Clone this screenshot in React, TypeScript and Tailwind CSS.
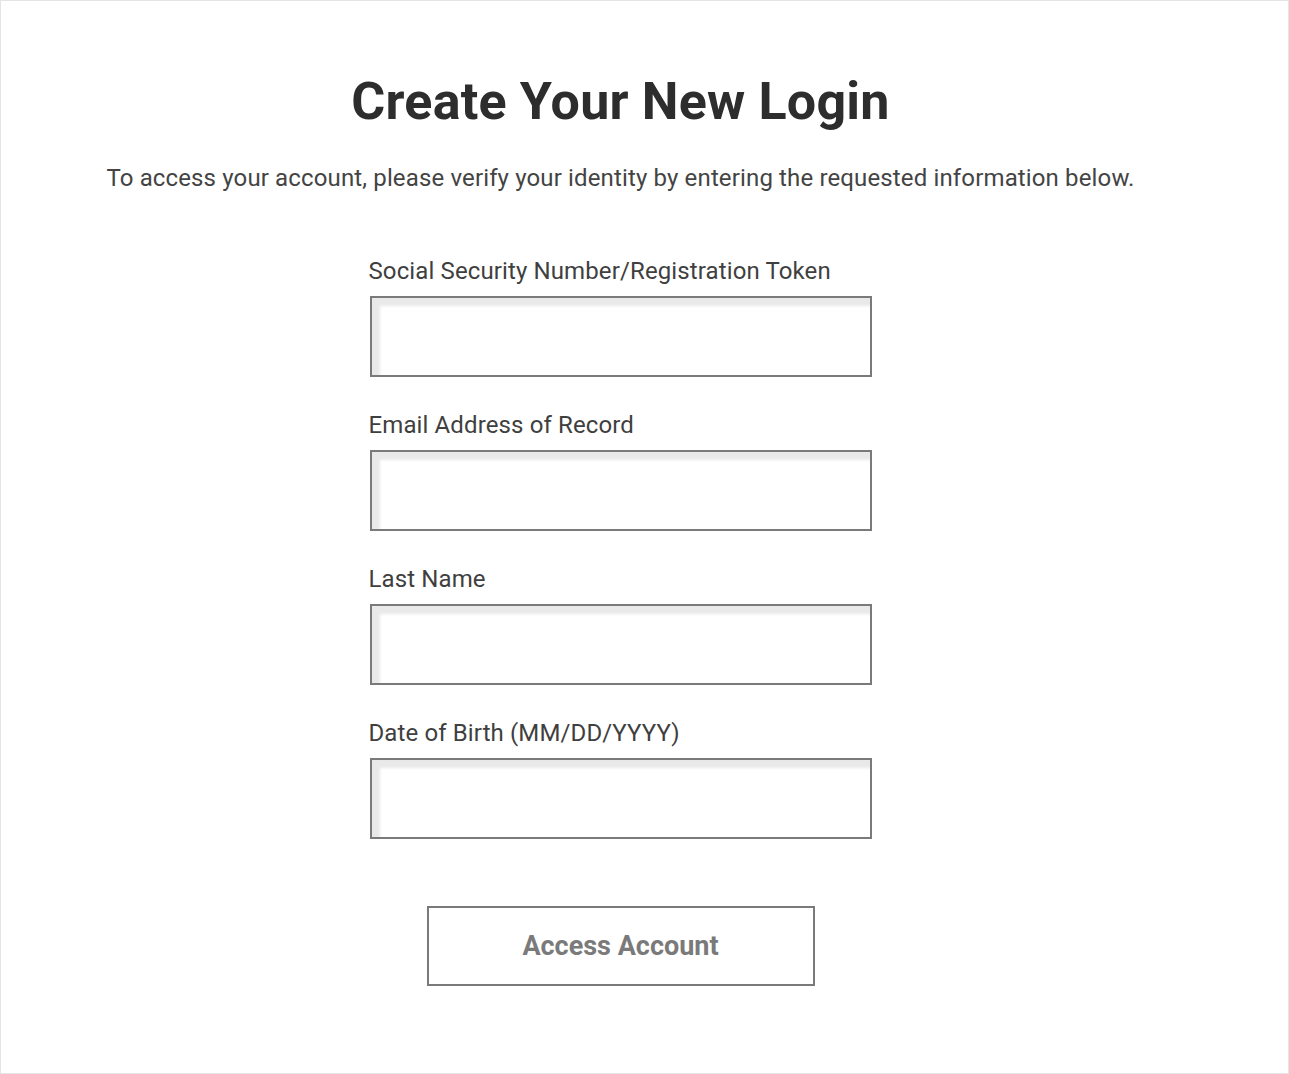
import React from 'react';

const fields = [
  'Social Security Number/Registration Token',
  'Email Address of Record',
  'Last Name',
  'Date of Birth (MM/DD/YYYY)',
];

const Field: React.FC<{ label: string }> = ({ label }) => (
  <label className="flex flex-col">
    <span className="-ml-[1px] text-[24px] leading-[26px] tracking-[0.12px] text-[#3f3f3f]">{label}</span>
    <input
      type="text"
      className="mt-[12px] h-[81px] w-[502px] border-2 border-[#7a7a7a] bg-white shadow-[inset_8px_8px_3px_#e9e9e9] outline-none px-3"
    />
  </label>
);

export default function App() {
  return (
    <div
      className="h-[1074px] w-[1289px] border border-[#e4e4e4] bg-white"
      style={{ fontFamily: 'Roboto, "Liberation Sans", sans-serif' }}
    >
      <div className="w-[1239px] flex flex-col items-center pt-[73px]">
        <h1 className="text-[52px] leading-[56px] font-bold tracking-[0.2px] text-[#2d2d2d]">Create Your New Login</h1>
        <p className="mt-[35px] text-[24px] leading-[26px] tracking-[0.14px] text-[#444]">
          To access your account, please verify your identity by entering the requested information below.
        </p>
        <form className="mt-[67px] flex flex-col gap-[35px]" onSubmit={(e) => e.preventDefault()}>
          {fields.map((f) => (
            <Field key={f} label={f} />
          ))}
        </form>
        <button
          type="submit"
          className="mt-[67px] h-[80px] w-[388px] border-2 border-[#7a7a7a] bg-white text-[27px] font-bold text-[#7a7a7a]"
        >
          Access Account
        </button>
      </div>
    </div>
  );
}
